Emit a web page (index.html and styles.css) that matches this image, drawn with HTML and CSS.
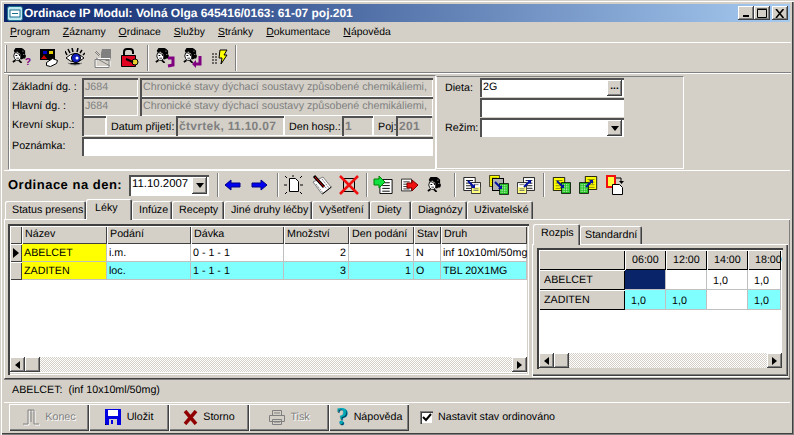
FILE: index.html
```html
<!DOCTYPE html>
<html lang="cs">
<head>
<meta charset="utf-8">
<title>Ordinace IP Modul</title>
<link rel="stylesheet" href="styles.css">
</head>
<body>
<svg class="defs" width="0" height="0">
  <defs>
    <symbol id="head" viewBox="0 0 16 17">
      <path fill="#000" d="M4 0h7l2 1 2 2v4l1 2-1 3h-2l-2 1-2-1V6H8L6 4 4 5H3L2 3z"/>
      <path fill="#fff" stroke="#000" d="M3 5.500h3l2 2 2-1v5l-2 2.500H5l-2-2-1-3z"/>
      <path fill="#000" d="M4 8h2v1H4zM8 8h1v1H8zM5 11h3v1H5z"/>
      <path stroke="#000" stroke-width="2" d="M4 14l-3 2M8 14l3 3"/>
      <path fill="#fff" d="M12 3h1v1h-1zM13 7h1v1h-1z"/>
    </symbol>
    <symbol id="doc" viewBox="0 0 14 16">
      <path fill="#fff" stroke="#000" d="M.5.5h13v15H.5z"/>
      <path stroke="#000" d="M3 4h8M3 7h8M3 10h8M3 13h8"/>
    </symbol>
    <symbol id="ydoc" viewBox="0 0 14 16">
      <path fill="#ffff00" stroke="#000" d="M.5.5h13v15H.5z"/>
      <path stroke="#808000" d="M3 4h8M3 7h8M3 10h8M3 13h8"/>
    </symbol>
    <symbol id="gdoc" viewBox="0 0 12 14">
      <path fill="#22c422" stroke="#000" d="M.5.5h11v13H.5z"/>
      <path stroke="#fff" stroke-dasharray="1 1" d="M2 3h8M2 5h8M2 7h8M2 9h8M2 11h8"/>
    </symbol>
    <symbol id="pdoc" viewBox="0 0 12 14">
      <path fill="#fff" stroke="#000" d="M.5.5h11v13H.5z"/>
      <path fill="#ffff80" d="M1 6h10v7H1z"/>
      <path stroke="#666" d="M3 3h6M3 8h6M3 10h6"/>
    </symbol>
  </defs>
</svg>
<div class="window">
  <div class="title">
    <svg class="ticon" width="16" height="15" viewBox="0 0 16 15"><rect x=".5" y=".5" width="15" height="14" rx="2" fill="#bfe8f0" stroke="#1d6f8f"/><rect x="3" y="4" width="10" height="7" fill="#fff" stroke="#1d6f8f"/><path stroke="#1d6f8f" d="M5 7.500h6"/></svg>
    <span class="ttext">Ordinace IP Modul: Volná Olga 645416/0163: 61-07 poj.201</span>
    <div class="wbtns">
      <span class="wb"><svg width="8" height="8" viewBox="0 0 8 8"><path d="M1 6h6v2H1z"/></svg></span>
      <span class="wb"><svg width="11" height="10" viewBox="0 0 11 10"><path fill="none" stroke="#000" d="M.5 1.500h9v8h-9z"/><path stroke="#000" d="M0 1h10"/></svg></span>
      <span class="wb wbc"><svg width="10" height="9" viewBox="0 0 10 9"><path stroke="#000" stroke-width="1.600" d="M1 0l7.500 9M8.500 0L1 9"/></svg></span>
    </div>
  </div>
  <div class="menu">
    <span><u>P</u>rogram</span><span><u>Z</u>áznamy</span><span><u>O</u>rdinace</span><span><u>S</u>lužby</span><span><u>S</u>tránky</span><span><u>D</u>okumentace</span><span><u>N</u>ápověda</span>
  </div>
  <div class="toolbar">
    <span class="handle"></span>
    <svg class="g5" width="20" height="20" viewBox="0 0 20 20"><use href="#head" width="14" height="15"/><text x="13" y="17" class="qm">?</text></svg>
    <svg class="g7" width="20" height="20" viewBox="0 0 20 20"><path fill="#000" d="M1 1h15v11H1z"/><path fill="#d00000" d="M5 7l3 4H2z"/><path fill="#0000c0" d="M4 3h4v3H4z"/><path fill="#e0d000" d="M10 3h4v3h-4z"/><path fill="#fff" stroke="#000" d="M7.500 14.500l6-4 5 2-1 3-6 3-4-1z"/></svg>
    <svg class="g6" width="20" height="20" viewBox="0 0 20 20"><path fill="#fff" stroke="#000" d="M1 10q9-9 18 0-9 8-18 0z"/><circle cx="11" cy="10" r="4.500" fill="#1020c0" stroke="#000"/><circle cx="12" cy="10" r="1.500" fill="#fff"/><path stroke="#000" stroke-width="1.500" d="M2 7L0 3M5 5L3 1M8 4L7 0M12 4l1-4M15 5l2-3M18 7l2-2"/><path stroke="#808080" d="M3 15q7 4 14 0"/></svg>
    <svg class="g8" width="20" height="20" viewBox="0 0 20 20"><path fill="#808080" d="M9 1h9v12h-5l-3-3-2 1V5z"/><path fill="none" stroke="#fff" d="M3 10.500h14v8H3z"/><path stroke="#808080" d="M3 10l14 8M2 4l4 4M3 3l4 4"/><path fill="none" stroke="#808080" d="M2 11.500h14v8H2z"/></svg>
    <svg class="g7" width="20" height="20" viewBox="0 0 20 20"><path fill="none" stroke="#000" stroke-width="2" d="M4 8V4q0-3 3-3h3q3 0 3 3v2"/><path fill="#e00020" stroke="#000" d="M1.500 7.500h14v11h-14z"/><circle cx="15" cy="14" r="3" fill="#e8d030" stroke="#000"/><path stroke="#000" stroke-width="2" d="M6 11l7 3"/></svg>
    <span class="sep g7"></span>
    <svg class="g6" width="20" height="20" viewBox="0 0 20 20"><use href="#head" width="14" height="15"/><path fill="none" stroke="#800080" stroke-width="3" d="M13 10h5v7l-5 1"/></svg>
    <svg class="g8" width="20" height="20" viewBox="0 0 20 20"><use href="#head" width="14" height="15"/><path fill="none" stroke="#800080" stroke-width="3" d="M17 8v8h-5"/><path fill="#800080" d="M9 16l4-4v8z"/></svg>
    <svg class="g6" width="20" height="20" viewBox="0 0 20 20"><path stroke="#000" stroke-dasharray="2 1" d="M3 6h5M3 9h5M3 12h5M3 15h5"/><path fill="#ffff00" stroke="#000" d="M11 2h7l-3 5h3l-6 9 1-6h-3z"/></svg>
    <span class="sep g6"></span>
  </div>
  <div class="head">
    <div class="info">
      <div class="row r19"><span class="lab">Základní dg. :</span><span class="fld w56">J684</span><span class="fld w293 ml2">Chronické stavy dýchací soustavy způsobené chemikáliemi,</span></div>
      <div class="row r19"><span class="lab">Hlavní dg. :</span><span class="fld w56">J684</span><span class="fld w293 ml2">Chronické stavy dýchací soustavy způsobené chemikáliemi,</span></div>
      <div class="row r21"><span class="lab">Krevní skup.:</span><span class="fld w23"></span><span class="cap w70">Datum přijetí:</span><span class="fld w108 bold">čtvrtek, 11.10.07</span><span class="cap w58">Den hosp.:</span><span class="fld w31 bold">1</span><span class="cap w22">Poj:</span><span class="fld w36 bold">201</span></div>
      <div class="row r19"><span class="lab">Poznámka:</span><span class="fld w351 white"></span></div>
    </div>
    <div class="dieta">
      <div class="row r20"><span class="dlab">Dieta:</span><span class="fld w144 white blk">2G<span class="mini dots">...</span></span></div>
      <div class="row r20"><span class="dlab"></span><span class="fld w144 white"></span></div>
      <div class="row r20"><span class="dlab">Režim:</span><span class="fld w144 white"><span class="mini drop"><i class="dn"></i></span></span></div>
    </div>
  </div>
  <div class="daybar">
    <span class="daylab">Ordinace na den:</span>
    <span class="fld combo white blk">11.10.2007<span class="mini drop"><i class="dn"></i></span></span>
    <span class="sep g8"></span>
    <svg class="g4" width="20" height="20" viewBox="0 0 20 20"><path fill="#0000f0" stroke="#000080" d="M2 10l6-5v3h9v4H8v3z"/></svg>
    <svg class="g6" width="20" height="20" viewBox="0 0 20 20"><path fill="#0000f0" stroke="#000080" d="M18 10l-6-5v3H3v4h9v3z"/></svg>
    <span class="sep g8"></span>
    <svg class="g5" width="20" height="20" viewBox="0 0 20 20"><path fill="#fff" stroke="#000" d="M5.500 3.500h6l3 3v10h-9z"/><path stroke="#000" d="M1 1l2 2M18 1l-2 2M1 19l2-2M18 19l-2-2M0 10h3M16 10h3M9 0v2"/></svg>
    <svg class="g8" width="20" height="20" viewBox="0 0 20 20"><path fill="#fff" stroke="#808080" d="M1 7l10-5 8 10-9 7z"/><path stroke="#808080" stroke-dasharray="2 1" d="M7 5l8 9M10 4l7 9M4 9l7 9"/><path stroke="#000" d="M10.500 19l9-7"/><path stroke="#000" stroke-width="3" d="M2 1l10 11"/><path stroke="#e00000" d="M3 2l9 10"/></svg>
    <svg class="g7" width="20" height="20" viewBox="0 0 20 20"><path fill="none" stroke="#000" d="M4.500 3.500h11v13h-11z"/><path stroke="#f01010" stroke-width="2.500" d="M1 1l18 18M19 1L1 19"/></svg>
    <span class="sep g7"></span>
    <svg class="g5" width="20" height="20" viewBox="0 0 20 20"><use href="#doc" x="6" y="4" width="14" height="15"/><path fill="#10e040" stroke="#008000" d="M1 4h5V1l6 6-6 6v-3H1z"/></svg>
    <svg class="g7" width="20" height="20" viewBox="0 0 20 20"><use href="#doc" x="1" y="3" width="11" height="14"/><path fill="#f01010" stroke="#800000" d="M7 8h5V5l6 5-6 6v-3H7z"/></svg>
    <svg class="g4" width="20" height="20" viewBox="0 0 20 20"><use href="#head" x="3" y="2" width="14" height="15"/></svg>
    <span class="sep g10"></span>
    <svg class="g6" width="20" height="20" viewBox="0 0 20 20"><use href="#doc" x="1" y="2" width="13" height="14"/><use href="#pdoc" x="9" y="7" width="10" height="12"/><path stroke="#0010a0" stroke-width="2" d="M6 6l6 6"/><path fill="#0010a0" d="M13 13h-4l4-4z"/></svg>
    <svg class="g7" width="20" height="20" viewBox="0 0 20 20"><use href="#ydoc" x="0" y="0" width="11" height="12"/><rect x="3.500" y="3.500" width="11" height="12" fill="#b0b0b0" stroke="#000"/><use href="#gdoc" x="10" y="8" width="10" height="12"/><path stroke="#0010a0" stroke-width="2" d="M6 7l6 6"/><path fill="#0010a0" d="M13 14H9l4-4z"/></svg>
    <svg class="g7" width="20" height="20" viewBox="0 0 20 20"><use href="#doc" x="7" y="2" width="12" height="14"/><use href="#pdoc" x="1" y="7" width="10" height="12"/><path stroke="#0010a0" stroke-width="2" d="M8 12l6-6"/><path fill="#0010a0" d="M15 5v4l-4-4z"/></svg>
    <span class="sep g7"></span>
    <svg class="g6" width="20" height="20" viewBox="0 0 20 20"><use href="#ydoc" x="1" y="2" width="14" height="14"/><use href="#gdoc" x="10" y="7" width="10" height="12"/><path stroke="#0010a0" stroke-width="2" d="M6 6l6 6"/><path fill="#0010a0" d="M13 13H9l4-4z"/></svg>
    <svg class="g7" width="20" height="20" viewBox="0 0 20 20"><use href="#ydoc" x="6" y="1" width="14" height="14"/><use href="#gdoc" x="1" y="7" width="10" height="12"/><path stroke="#0010a0" stroke-width="2" d="M8 12l6-6"/><path fill="#0010a0" d="M15 5v4l-4-4z"/></svg>
    <svg class="g7" width="20" height="20" viewBox="0 0 20 20"><path fill="#ffff40" stroke="#f01010" stroke-width="2" d="M2 1h8v11H2z"/><path fill="#fff" stroke="#000" d="M7.500 9.500h7l3 3v7h-10z"/><path fill="none" stroke="#000" d="M11 3h5v4"/><path d="M14 6h5l-2.500 3z"/></svg>
  </div>
  <div class="tabs">
    <span class="tab t81">Status presens</span><span class="tab act t45">Léky</span><span class="tab t40">Infúze</span><span class="tab t52">Recepty</span><span class="tab t88">Jiné druhy léčby</span><span class="tab t58">Vyšetření</span><span class="tab t41">Diety</span><span class="tab t56">Diagnózy</span><span class="tab t66">Uživatelské</span>
  </div>
  <div class="content">
    <div class="pane">
      <div class="gridwrap">
        <div class="dgrid">
          <span class="hc"></span><span class="hc">Název</span><span class="hc">Podání</span><span class="hc">Dávka</span><span class="hc">Množství</span><span class="hc">Den podání</span><span class="hc">Stav</span><span class="hc">Druh</span>
          <span class="hc"><i class="rt ind"></i></span><span class="dc yel">ABELCET</span><span class="dc">i.m.</span><span class="dc">0 - 1 - 1</span><span class="dc num">2</span><span class="dc num">1</span><span class="dc">N</span><span class="dc">inf 10x10ml/50mg</span>
          <span class="hc"></span><span class="dc yel">ZADITEN</span><span class="dc cy">loc.</span><span class="dc cy">1 - 1 - 1</span><span class="dc cy num">3</span><span class="dc cy num">1</span><span class="dc cy">O</span><span class="dc cy">TBL 20X1MG</span>
        </div>
      </div>
      <div class="sbar">
        <span class="sb"><i class="lt"></i></span><span class="sb"></span><span class="track"></span><span class="sb"><i class="rt"></i></span>
      </div>
    </div>
    <div class="side">
      <div class="stabs"><span class="tab act t47">Rozpis</span><span class="tab t62">Standardní</span></div>
      <div class="spane">
        <div class="sinner">
          <div class="gridwrap">
            <div class="sgrid">
              <span class="hc2"></span><span class="hc2 cen">06:00</span><span class="hc2 cen">12:00</span><span class="hc2 cen">14:00</span><span class="hc2 cen">18:00</span>
              <span class="hc2">ABELCET</span><span class="sc navy"></span><span class="sc"></span><span class="sc">1,0</span><span class="sc">1,0</span>
              <span class="hc2">ZADITEN</span><span class="sc cy">1,0</span><span class="sc cy">1,0</span><span class="sc"></span><span class="sc cy">1,0</span>
            </div>
          </div>
          <div class="sbar">
            <span class="sb"><i class="lt"></i></span><span class="sb"></span><span class="track"></span><span class="sb"><i class="rt"></i></span>
          </div>
        </div>
      </div>
    </div>
  </div>
  <div class="status">ABELCET:&nbsp; (inf 10x10ml/50mg)</div>
  <div class="buttons">
    <span class="btn dis ib1"><svg width="18" height="18" viewBox="0 0 18 18"><path fill="none" stroke="#fff" d="M2 17h5V3h6v14h5"/><path fill="none" stroke="#808080" d="M1 16h5V2h6v14h5M9 2v12"/></svg>Konec</span>
    <span class="btn ib2"><svg width="16" height="16" viewBox="0 0 16 16"><path fill="#0000e0" d="M0 0h16v16H0z"/><path fill="#fff" d="M3 1h10v6H3z"/><path fill="#d4d0c8" d="M4 10h8v6H4z"/><path fill="#0000e0" d="M6 11h2v4H6z"/><path fill="#000" d="M0 15h1v1H0z"/></svg>Uložit</span>
    <span class="btn ib3"><svg width="15" height="15" viewBox="0 0 15 15"><path stroke="#900000" stroke-width="3.500" d="M2 1l11 13M13 1L2 14"/></svg>Storno</span>
    <span class="btn dis ib4"><svg width="18" height="16" viewBox="0 0 18 16"><path fill="#d4d0c8" stroke="#808080" d="M4.500 1.500h9v5h-9zM1.500 6.500h15v6h-15zM4.500 10.500h9v5h-9z"/><path stroke="#808080" d="M6 4h6M6 13h6"/></svg>Tisk</span>
    <span class="btn help"><span class="qicon">?</span>Nápověda</span>
    <span class="chk"><svg width="10" height="9" viewBox="0 0 10 9"><path fill="none" stroke="#000" stroke-width="2" d="M1 4l3 3 5-6"/></svg></span>
    <span class="chklab">Nastavit stav ordinováno</span>
  </div>
</div>
</body>
</html>
```
FILE: styles.css
```css
* { box-sizing: border-box; }
html, body { margin: 0; padding: 0; background: #d4d0c8; }
body { font: 10.7px/13px "Liberation Sans", Arial, sans-serif; color: #000; text-rendering: geometricPrecision; }
.defs { position: absolute; }
.window { width: 794px; height: 435px; overflow: hidden; padding: 4px 4px 0; background: #d4d0c8; box-shadow: inset 1px 1px #d4d0c8, inset 2px 2px #fff, inset -1px -1px #808080, inset -2px -2px #404040; display: flex; flex-direction: column; }
.title { height: 18px; flex: none; background: linear-gradient(90deg, #0a246a, #a6caf0); display: flex; align-items: center; padding-left: 3px; color: #fff; }
.ticon { flex: none; }
.ttext { margin-left: 1px; font: bold 12px/16px "Liberation Sans", sans-serif; letter-spacing: -.03px; white-space: nowrap; }
.wbtns { margin-left: auto; margin-right: 2px; display: flex; }
.wb { width: 16px; height: 14px; display: flex; align-items: center; justify-content: center; background: #d4d0c8; box-shadow: inset -1px -1px #404040, inset 1px 1px #fff, inset -2px -2px #808080; }
.wbc { margin-left: 2px; }
.menu { height: 20px; flex: none; display: flex; align-items: center; gap: 13px; padding-left: 6px; font-size: 10.4px; }
.menu u { text-decoration: underline; }
.toolbar { height: 32px; flex: none; display: flex; align-items: center; border-top: 1px solid #fff; border-bottom: 1px solid #fff; box-shadow: inset 0 -1px #808080; margin-right: -1px; }
.handle { width: 2px; height: 27px; flex: none; background: #fff; margin-left: 1px; border-right: 1px solid #808080; }
.sep { width: 2px; height: 26px; flex: none; background: #808080; border-right: 1px solid #fff; }
.g4 { margin-left: 4px; } .g5 { margin-left: 5px; } .g6 { margin-left: 6px; } .g7 { margin-left: 7px; } .g8 { margin-left: 8px; } .g10 { margin-left: 10px; }
svg { flex: none; display: block; }
.qm { font: bold 10px "Liberation Sans", sans-serif; fill: #800080; }
.head { height: 97px; flex: none; display: flex; padding: 1px 0 0 4px; border-bottom: 1px solid #fff; }
.info { width: 428px; height: 95px; border: 1px solid #fff; border-top-color: #808080; border-left-color: #808080; padding: 2px 0 0 3px; box-shadow: inset 1px 0 #fff; }
.dieta { width: 248px; height: 93px; margin-top: 1px; border: 1px solid #fff; border-top-color: #808080; padding: 1px 0 0 0; }
.row { display: flex; }
.r19 { height: 19px; } .r20 { height: 20px; } .r21 { height: 21px; }
.lab { width: 70px; flex: none; line-height: 18px; }
.dlab { width: 43px; flex: none; padding-left: 8px; line-height: 20px; }
.fld { display: block; flex: none; height: 19px; position: relative; padding: 3px 0 0 3px; color: #808080; background: #d4d0c8; white-space: nowrap; overflow: hidden; box-shadow: inset 2px 2px #505050, inset -1px -1px #fff; }
.r21 .fld { height: 20px; }
.bold { font-weight: bold; font-size: 12px; letter-spacing: .3px; padding-top: 4px; }
.white { background: #fff; color: #000; }
.ml2 { margin-left: 2px; }
.w56 { width: 56px; } .w293 { width: 293px; } .w23 { width: 24px; } .w108 { width: 108px; } .w31 { width: 31px; } .w36 { width: 36px; } .w351 { width: 351px; } .w144 { width: 144px; }
.cap { flex: none; height: 20px; padding: 3px 0 0 4px; border-left: 1px solid #fff; border-bottom: 1px solid #fff; white-space: nowrap; line-height: 17px; }
.w70 { width: 70px; } .w58 { width: 58px; } .w22 { width: 23px; }
.blk { color: #000; }
.mini { position: absolute; right: 2px; top: 2px; width: 15px; height: 16px; background: #d4d0c8; box-shadow: inset -1px -1px #404040, inset 1px 1px #fff, inset -2px -2px #808080; display: flex; align-items: center; justify-content: center; color: #000; }
.dots { font-weight: bold; line-height: 10px; padding-bottom: 3px; font-size: 10px; }
.dn { width: 0; height: 0; border: 4px solid transparent; border-top: 5px solid #000; border-bottom: 0; display: block; }
.daybar { height: 28px; flex: none; display: flex; align-items: center; padding-left: 4px; }
.daylab { width: 121px; flex: none; font: bold 13px/16px "Liberation Sans", sans-serif; letter-spacing: .5px; white-space: nowrap; }
.combo { width: 80px; height: 21px; font-size: 11.4px; color: #000; }
.combo .mini { top: 2px; height: 17px; }
.daybar .sep { height: 24px; }
.tabs { height: 20px; flex: none; display: flex; padding-left: 1px; align-items: flex-end; }
.tab { display: block; flex: none; height: 18px; padding: 2px 0 0 7px; white-space: nowrap; box-shadow: inset 1px 1px #fff, inset -1px 0 #404040, inset -2px 0 #808080; border-radius: 2px 2px 0 0; line-height: 15px; }
.tab.act { height: 21px; margin-bottom: -1px; padding-top: 2px; background: #d4d0c8; position: relative; z-index: 2; box-shadow: inset 1px 1px #fff, inset -1px 0 #404040, inset -2px 0 #808080; }
.t81 { width: 81px; } .t45 { width: 46px; padding-left: 9px; } .t40 { width: 40px; } .t52 { width: 52px; } .t88 { width: 88px; } .t58 { width: 58px; } .t41 { width: 41px; } .t56 { width: 56px; } .t66 { width: 66px; } .t47 { width: 47px; padding-left: 8px; } .t62 { width: 62px; padding-left: 5px; }
.content { height: 160px; flex: none; display: flex; padding: 4px 0 0 3px; border-top: 1px solid #fff; border-left: 1px solid #fff; border-bottom: 1px solid #404040; box-shadow: inset -1px 0 #808080; }
.pane { width: 521px; height: 151px; display: flex; flex-direction: column; padding: 2px; background: #fff; box-shadow: inset 2px 2px #404040, inset -1px -1px #fff, inset -2px -2px #d4d0c8; }
.gridwrap { flex: 1; background: #fff; overflow: hidden; min-height: 0; }
.dgrid { display: grid; grid-template-columns: 12px 85px 84px 93px 65px 65px 27px 86px; grid-auto-rows: 18px; }
.hc { background: #d4d0c8; display: block; padding: 2px 0 0 3px; white-space: nowrap; overflow: hidden; box-shadow: inset 1px 1px #fff, inset -1px -1px #404040; position: relative; }
.dc { background: #fff; padding: 3px 0 0 2px; white-space: nowrap; overflow: hidden; box-shadow: inset -1px -1px #c0c0c0; }
.num { text-align: right; padding: 3px 3px 0 0; }
.yel { background: #ffff00; }
.cy { background: #80ffff; }
.rt, .lt, .ind { display: block; width: 0; height: 0; border: 4px solid transparent; }
.rt { border-left: 5px solid #000; border-right: 0; }
.lt { border-right: 5px solid #000; border-left: 0; }
.hc .ind { position: absolute; left: 3px; top: 4px; border-width: 5px 0 5px 6px; border-color: transparent transparent transparent #000; }
.sbar { height: 15px; flex: none; display: flex; margin-bottom: 1px; }
.sb { width: 15px; flex: none; display: flex; align-items: center; justify-content: center; background: #d4d0c8; box-shadow: inset -1px -1px #404040, inset 1px 1px #fff, inset -2px -2px #808080; }
.track { flex: 1; background-color: #d4d0c8; background-image: conic-gradient(#fff 25%, transparent 0 50%, #fff 0 75%, transparent 0); background-size: 2px 2px; }
.side { width: 257px; height: 151px; margin-left: 3px; display: flex; flex-direction: column; }
.stabs { height: 20px; flex: none; display: flex; align-items: flex-end; padding-left: 1px; }
.spane { height: 132px; flex: none; padding: 4px 5px 0 5px; margin-right: 1px; box-shadow: inset 1px 1px #fff, inset -1px -1px #404040, inset -2px -2px #808080, 0 1px #fff; }
.sinner { height: 121px; padding: 2px 1px 0 2px; background: #fff; display: flex; flex-direction: column; box-shadow: inset 2px 2px #404040, inset -1px -1px #d4d0c8; }
.sgrid { display: grid; grid-template-columns: 86px 41px 41px 41px 33px; grid-auto-rows: 20px; }
.hc2 { background: #d4d0c8; display: block; padding: 4px 0 0 5px; box-shadow: inset 1px 1px #fff, inset -1px -1px #000; white-space: nowrap; }
.cen { padding-left: 7px; }
.sc { display: block; padding: 5px 0 0 6px; background: #fff; box-shadow: inset -1px -1px #c0c0c0; }
.sc.cy { background: #80ffff; }
.navy { background: #0a246a; }
.status { height: 24px; flex: none; padding: 5px 0 0 8px; border-bottom: 1px solid #fff; box-shadow: inset 0 1px #808080; }
.buttons { height: 28px; flex: none; display: flex; align-items: center; padding-left: 5px; }
.btn { width: 80px; height: 27px; flex: none; display: flex; align-items: center; justify-content: center; background: #d4d0c8; box-shadow: inset 1px 1px #fff, inset -1px -1px #404040, inset -2px -2px #808080; }
.ib1 { gap: 5px; } .ib2 { gap: 6px; } .ib3 { gap: 5px; } .ib4 { gap: 4px; }
.dis { color: #808080; text-shadow: 1px 1px #fff; }
.help { gap: 6px; }
.qicon { font: bold 24px/24px "Liberation Serif", serif; color: #00a8b8; text-shadow: 1px 1px #004060; }
.chk { width: 13px; height: 13px; flex: none; margin-left: 11px; background: #fff; display: flex; align-items: center; justify-content: center; box-shadow: inset 1px 1px #808080, inset 2px 2px #404040, inset -1px -1px #d4d0c8; }
.chklab { margin-left: 5px; white-space: nowrap; }
```
